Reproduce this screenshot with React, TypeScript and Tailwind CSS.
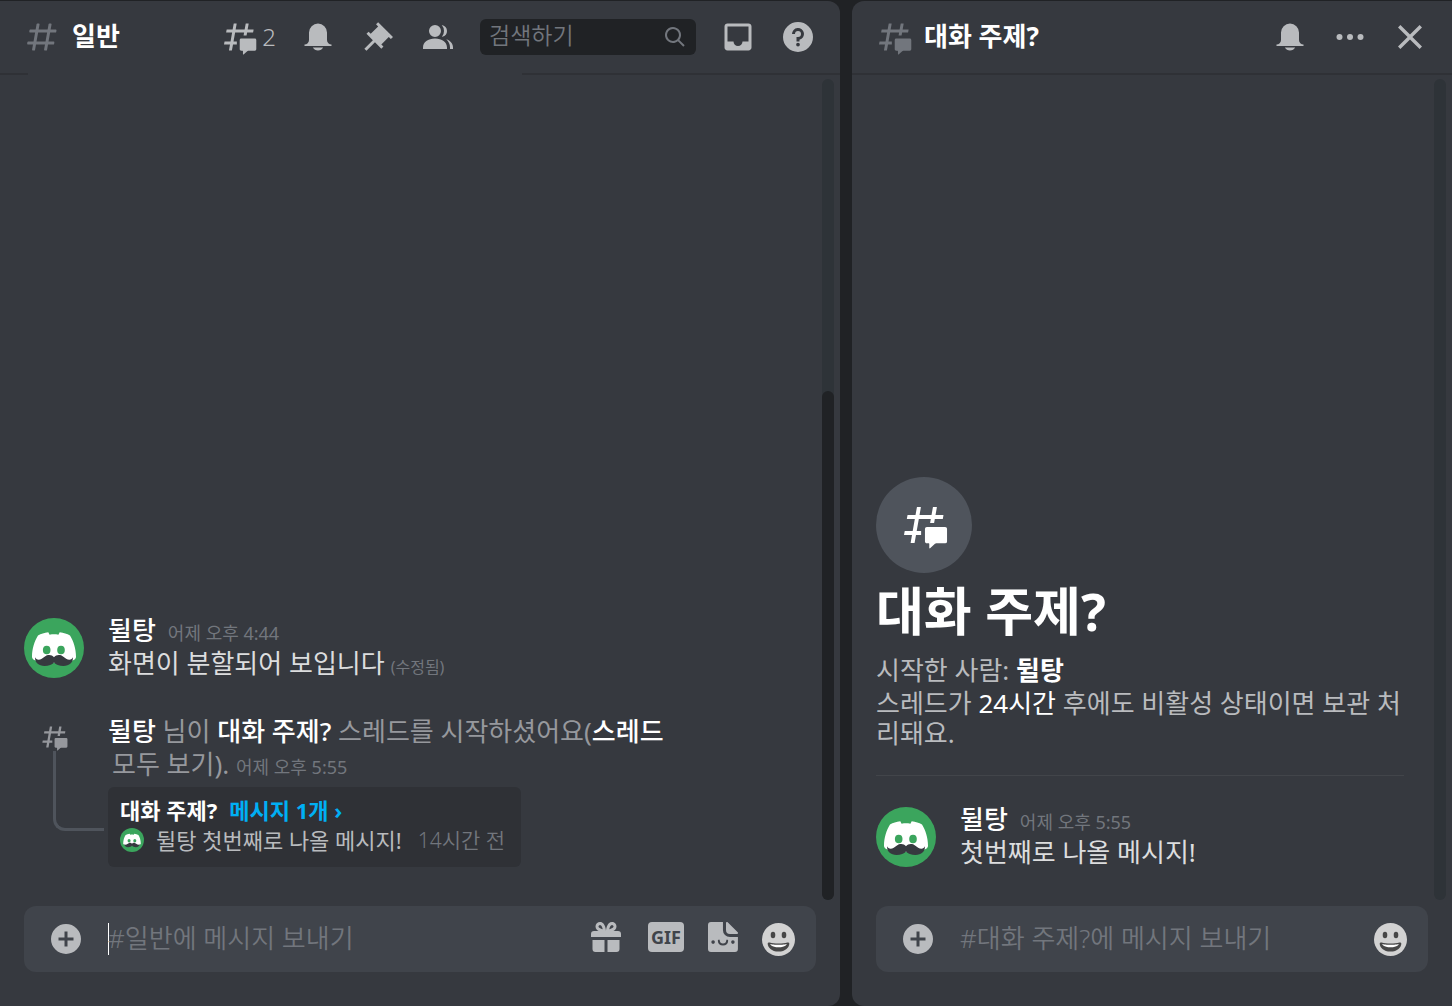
import React from "react";

type IconProps = { className?: string };

function Icon({ className = "size-9", children }: { className?: string; children: React.ReactNode }) {
  return (
    <svg viewBox="0 0 24 24" fill="currentColor" fillRule="evenodd" className={`shrink-0 ${className}`} aria-hidden="true">
      {children}
    </svg>
  );
}

function HashIcon({ className }: IconProps) {
  return (
    <Icon className={className}>
      <path d="M5.887 21a.5.5 0 0 1-.493-.587L6 17H2.595a.5.5 0 0 1-.492-.586l.175-1A.5.5 0 0 1 2.77 15h3.58l1.06-6H4.005a.5.5 0 0 1-.492-.586l.175-1A.5.5 0 0 1 4.18 7h3.58l.637-3.587A.5.5 0 0 1 8.889 3h.984a.5.5 0 0 1 .493.587L9.76 7h6l.637-3.587A.5.5 0 0 1 16.889 3h.984a.5.5 0 0 1 .493.587L17.76 7h3.405a.5.5 0 0 1 .492.586l-.175 1a.5.5 0 0 1-.492.414h-3.58l-1.06 6h3.405a.5.5 0 0 1 .492.586l-.175 1a.5.5 0 0 1-.492.414H16l-.637 3.587a.5.5 0 0 1-.492.413h-.984a.5.5 0 0 1-.493-.587L14 17H8l-.637 3.587a.5.5 0 0 1-.492.413h-.984ZM9.41 9l-1.06 6h6l1.06-6h-6Z" />
    </Icon>
  );
}

function ThreadIcon({ className }: IconProps) {
  return (
    <Icon className={className}>
      <path d="M5.433 21a.12.12 0 0 1-.118-.141L6 17H2.143a.12.12 0 0 1-.118-.141l.308-1.76A.12.12 0 0 1 2.45 15h3.9l1.06-6H3.553a.12.12 0 0 1-.118-.141l.308-1.76A.12.12 0 0 1 3.86 7h3.9l.692-3.901A.12.12 0 0 1 8.57 3h1.757a.12.12 0 0 1 .118.141L9.76 7h6l.692-3.901A.12.12 0 0 1 16.57 3h1.757a.12.12 0 0 1 .118.141L17.76 7h3.857a.12.12 0 0 1 .118.141l-.308 1.76a.12.12 0 0 1-.118.099h-3.9l-.36 2.04h-2l.361-2.04h-6l-1.06 6h2.21v2H8l-.693 3.901a.12.12 0 0 1-.118.099H5.433Z" />
      <path d="M13.44 12.96a.96.96 0 0 0-.96.96v6.301c0 .53.43.96.96.96h.96a.24.24 0 0 1 .24.24v2.039c0 .208.247.317.4.178l2.446-2.21a.96.96 0 0 1 .643-.247h4.431a.96.96 0 0 0 .96-.96V13.92a.96.96 0 0 0-.96-.96h-9.12Z" />
    </Icon>
  );
}

function BellIcon() {
  return (
    <Icon>
      <path d="M18 9v5a3 3 0 0 0 3 3v1H3v-1a3 3 0 0 0 3-3V9a6 6 0 0 1 12 0Zm-6 12a3.98 3.98 0 0 1-3.445-2h6.89A3.98 3.98 0 0 1 12 21Z" />
    </Icon>
  );
}

function PinIcon() {
  return (
    <Icon>
      <path d="M22 12 12.101 2.101l-1.415 1.413 1.415 1.415-4.95 4.949-1.415-1.413L4.322 9.88l4.243 4.242-5.657 5.656 1.414 1.414 5.657-5.656 4.243 4.242 1.414-1.414-1.414-1.414L19.172 12l1.414 1.414L22 12Z" />
    </Icon>
  );
}

function MembersIcon() {
  return (
    <Icon>
      <path d="M14 8.006a4 4 0 1 1-8 0 4 4 0 0 1 8 0Zm-12 11c0-3.533 3.29-6 8-6 4.711 0 8 2.467 8 6v1H2v-1Z" />
      <path d="M20 20.006h2v-1c0-2.563-1.73-4.565-4.479-5.471C19.062 14.913 20 16.806 20 19.006v1Z" />
      <path d="M14.883 11.908A4 4 0 0 0 18 8.006a4 4 0 0 0-3.503-3.97A5.98 5.98 0 0 1 16 8.007a5.98 5.98 0 0 1-1.362 3.804l.245.098Z" />
    </Icon>
  );
}

function InboxIcon() {
  return (
    <Icon>
      <path d="M19 3H4.99C3.88 3 3.01 3.89 3.01 5L3 19c0 1.1.88 2 1.99 2H19c1.1 0 2-.9 2-2V5c0-1.11-.9-2-2-2Zm0 12h-4c0 1.66-1.35 3-3 3s-3-1.34-3-3H4.99V5H19v10Z" />
    </Icon>
  );
}

function HelpIcon() {
  return (
    <Icon>
      <path d="M12 2a10 10 0 1 0 0 20 10 10 0 0 0 0-20Zm0 16.25a1.25 1.25 0 1 1 0-2.5 1.25 1.25 0 0 1 0 2.5Zm1-4.375V15h-2v-3h1a2 2 0 1 0-2-2H8a4 4 0 1 1 5 3.875Z" />
    </Icon>
  );
}

function SearchIcon() {
  return (
    <Icon className="size-6">
      <path d="M21.707 20.293 16.314 14.9A8 8 0 1 0 14.9 16.314l5.393 5.392 1.414-1.413ZM10 16a6 6 0 1 1 0-12 6 6 0 0 1 0 12Z" />
    </Icon>
  );
}

function MoreIcon() {
  return (
    <Icon>
      <circle cx="5" cy="12" r="2" />
      <circle cx="12" cy="12" r="2" />
      <circle cx="19" cy="12" r="2" />
    </Icon>
  );
}

function CloseIcon() {
  return (
    <Icon>
      <path d="M18.4 4 12 10.4 5.6 4 4 5.6l6.4 6.4L4 18.4 5.6 20l6.4-6.4 6.4 6.4 1.6-1.6-6.4-6.4L20 5.6 18.4 4Z" />
    </Icon>
  );
}

function PlusIcon() {
  return (
    <Icon>
      <path d="M12 2a10 10 0 1 0 0 20 10 10 0 0 0 0-20Zm5 11h-4v4h-2v-4H7v-2h4V7h2v4h4v2Z" />
    </Icon>
  );
}

function GiftIcon() {
  return (
    <Icon>
      <path d="M16.886 7.999H20a2 2 0 0 1 2 2v2H2v-2a2 2 0 0 1 2-2h3.114a4.9 4.9 0 0 1-1.235-.878 3 3 0 0 1 0-4.242c1.133-1.133 3.107-1.133 4.242-.002C11.758 4.514 11.979 7.595 11.998 7.941h.004c.02-.345.24-3.426 1.877-5.063 1.135-1.133 3.107-1.132 4.242-.001a3 3 0 0 1 0 4.243c-.357.357-.784.644-1.235.879ZM7.293 5.707a1 1 0 0 1 0-1.415 1 1 0 0 1 1.414 0c.59.59.934 1.648 1.118 2.53-.88-.183-1.946-.529-2.532-1.115Zm6.881 1.117c.185-.883.528-1.941 1.119-2.531a1 1 0 0 1 1.413-.002 1 1 0 0 1 .001 1.416c-.591.591-1.65.935-2.533 1.117ZM3 13.999v6a2 2 0 0 0 2 2h6v-8H3Zm10 0v8h6a2 2 0 0 0 2-2v-6h-8Z" />
    </Icon>
  );
}

function StickerIcon() {
  return (
    <svg viewBox="0 0 20 20" className="size-[30px] shrink-0" fill="currentColor" aria-hidden="true">
      <path d="M12 .663v4.739A2.598 2.598 0 0 0 14.599 8h4.74c.585 0 .883-.704.466-1.12L13.121.196C12.704-.22 12 .077 12 .663Z" />
      <path d="M14.576 10.028A4.606 4.606 0 0 1 9.97 5.422V.058H1.994A2 2 0 0 0 0 2.052v15.952a2 2 0 0 0 1.994 1.994h15.952a2 2 0 0 0 1.994-1.994v-7.976h-5.364Z" />
      <circle cx="3.4" cy="13.4" r="1.2" className="fill-[#40444b]" />
      <circle cx="16.6" cy="13.4" r="1.2" className="fill-[#40444b]" />
      <path d="M7.2 12.4c.2 3.4 5.4 3.4 5.6 0" fill="none" strokeWidth="1.3" strokeLinecap="round" className="stroke-[#40444b]" />
    </svg>
  );
}

function EmojiIcon() {
  return (
    <svg viewBox="0 0 33 33" className="size-[33px] shrink-0" aria-hidden="true">
      <circle cx="16.5" cy="16.5" r="16.5" fill="#d2d2d2" />
      <ellipse cx="11" cy="12" rx="2.3" ry="3.3" fill="#474747" />
      <ellipse cx="22" cy="12" rx="2.3" ry="3.3" fill="#474747" />
      <path d="M16.5 20.500c-3.800 0-6.300-.4-8.900-1-.8-.1-1.900 0-1.900 1.200 0 3.500 3.900 7.900 10.800 7.900s10.800-4.400 10.800-7.900c0-1.200-1.100-1.300-1.900-1.200-2.600.6-5.100 1-8.900 1Z" fill="#474747" />
      <path d="M8 20.900s3 .8 8.500.8 8.500-.8 8.500-.8-1.500 3.400-8.500 3.400S8 20.900 8 20.900Z" fill="#fff" />
    </svg>
  );
}

function Avatar({ className }: { className: string }) {
  return (
    <svg viewBox="0 0 60 60" className={`shrink-0 ${className}`} role="img" aria-label="뒬탕">
      <circle cx="30" cy="30" r="30" fill="#3ba55d" />
      <path
        d="M24.300 14.300c-4 .6-7.300 1.600-10.300 3.200C10.500 23 8 30.500 8 39c0 1.500 1.500 3 4 3.800l18 2.200 18-2.200c2.500-.8 4-2.300 4-3.800 0-8.500-2.500-16-6-21.500-3-1.600-6.300-2.600-10.300-3.200l-1.300 2.400c-3-.5-5.800-.5-8.800 0l-1.300-2.400Z"
        fill="#fff"
      />
      <ellipse cx="22.700" cy="32" rx="3.800" ry="4.300" fill="#3ba55d" />
      <ellipse cx="37" cy="32" rx="3.800" ry="4.300" fill="#3ba55d" />
      <path
        d="M30 39.200c-1.500-1.800-3.600-2.400-5.800-2.100-3.700.5-5.500 4.700-9.500 4.700-1.800 0-3-1-3.600-2.500-.5 5 3.600 8.700 9.400 8.700 4.200 0 7.800-1.200 9.500-3.400 1.700 2.200 5.300 3.400 9.500 3.400 5.800 0 9.900-3.700 9.400-8.700-.6 1.500-1.800 2.500-3.600 2.500-4 0-5.800-4.200-9.500-4.700-2.200-.3-4.300.3-5.800 2.100Z"
        fill="#36393f"
      />
    </svg>
  );
}

function IconButton({ label, children }: { label: string; children: React.ReactNode }) {
  return (
    <button type="button" aria-label={label} className="flex shrink-0 items-center text-[#b9bbbe] hover:text-[#dcddde]">
      {children}
    </button>
  );
}

function Message({ time, edited, children }: { time: string; edited?: boolean; children: React.ReactNode }) {
  return (
    <article className="flex gap-6">
      <Avatar className="mt-1 size-[60px]" />
      <div className="min-w-0">
        <h3 className="flex items-baseline gap-3 leading-[33px]">
          <span className="text-[26px] font-medium text-white">뒬탕</span>
          <time className="text-lg text-[#72767d]">{time}</time>
        </h3>
        <p className="text-[26px] leading-[33px] text-[#dcddde]">
          {children}
          {edited && <span className="ml-1.5 text-base text-[#72767d]">(수정됨)</span>}
        </p>
      </div>
    </article>
  );
}

function Composer({ id, placeholder, focused, children }: { id: string; placeholder: string; focused?: boolean; children?: React.ReactNode }) {
  return (
    <form className="mx-6 mb-[34px] flex h-[66px] items-center rounded-xl bg-[#40444b] pl-6 pr-[21px]" onSubmit={(e) => e.preventDefault()}>
      <IconButton label="업로드">
        <PlusIcon />
      </IconButton>
      <div className="ml-6 flex min-w-0 flex-1 items-center">
        {focused && <span className="-mr-px h-8 w-px shrink-0 bg-white" />}
        <input
          id={id}
          type="text"
          aria-label={placeholder}
          placeholder={placeholder}
          className="h-12 w-full min-w-0 bg-transparent pb-0.5 text-[26px] font-[350] text-[#dcddde] outline-none placeholder:text-[#72767d]"
        />
      </div>
      <div className="flex items-center gap-6">
        {children && <div className="flex items-center gap-6 pb-1">{children}</div>}
        <button type="button" aria-label="이모티콘">
          <EmojiIcon />
        </button>
      </div>
    </form>
  );
}

function ChannelPanel() {
  return (
    <main className="flex min-w-0 flex-[840_1_0] flex-col rounded-r-xl bg-[#36393f]">
      <header className="flex h-[72px] items-center gap-6 px-6">
        <div className="flex min-w-0 flex-1 items-center gap-3">
          <HashIcon className="size-9 text-[#72767d]" />
          <h1 className="pb-0.5 text-[26px] font-bold text-white">일반</h1>
        </div>
        <button type="button" aria-label="스레드 2개" className="flex items-center gap-[5px] text-[#b9bbbe]">
          <ThreadIcon />
          <span className="text-2xl font-[350] leading-9">2</span>
        </button>
        <IconButton label="알림 설정">
          <BellIcon />
        </IconButton>
        <IconButton label="고정된 메시지">
          <PinIcon />
        </IconButton>
        <IconButton label="멤버 목록">
          <MembersIcon />
        </IconButton>
        <div className="flex h-9 w-[216px] items-center rounded-md bg-[#202225] px-[9px] text-[#72767d]">
          <input
            id="search"
            type="text"
            aria-label="검색하기"
            placeholder="검색하기"
            className="h-9 min-w-0 flex-1 bg-transparent pb-1 text-[23px] font-[350] text-[#dcddde] outline-none placeholder:text-[#72767d]"
          />
          <SearchIcon />
        </div>
        <IconButton label="받은 편지함">
          <InboxIcon />
        </IconButton>
        <IconButton label="도움말">
          <HelpIcon />
        </IconButton>
      </header>
      <div className="flex h-0.5 justify-between">
        <span className="w-7 bg-[#2f3136]" />
        <span className="w-[318px] bg-[#2f3136]" />
      </div>

      <div className="flex flex-1">
        <div className="flex min-w-0 flex-1 flex-col justify-end pb-[39px] pl-6">
          <Message time="어제 오후 4:44" edited>화면이 분할되어 보입니다</Message>

          <article className="mt-[35px] flex gap-6">
            <div className="flex w-[60px] shrink-0 flex-col items-end">
              <ThreadIcon className="mr-4 mt-2 size-7 text-[#96989d]" />
              <span className="-mr-5 h-20 w-[51px] rounded-bl-xl border-b-[3px] border-l-[3px] border-[#4f545c]" />
            </div>
            <div className="min-w-0">
              <p className="text-[26px] leading-[33px] text-[#96989d]">
                <a href="#user" className="font-medium text-white">뒬탕</a> 님이{" "}
                <a href="#thread" className="font-medium text-white">대화 주제?</a> 스레드를 시작하셨어요(
                <a href="#threads" className="font-medium text-white">스레드</a>
                <span className="block pl-1">
                  <a href="#threads">모두 보기</a>). <time className="text-lg text-[#72767d]">어제 오후 5:55</time>
                </span>
              </p>
              <a href="#thread" className="mt-1.5 flex w-fit flex-col rounded-md bg-[#2f3136] px-3 pb-3 pt-2">
                <span className="flex items-baseline gap-3 text-[22px] font-bold leading-[30px]">
                  <span className="text-white">대화 주제?</span>
                  <span className="text-[#00aff4]">메시지 1개 ›</span>
                </span>
                <span className="flex items-center gap-3 text-[22px] leading-[30px] text-[#b9bbbe]">
                  <Avatar className="size-6" />
                  <span>뒬탕 첫번째로 나올 메시지!</span>
                  <time className="px-1 text-[21px] font-[350] text-[#72767d]">14시간 전</time>
                </span>
              </a>
            </div>
          </article>
        </div>
        <div className="mb-1.5 mr-1.5 mt-1 flex w-3 flex-col justify-end rounded-full bg-[#2e3338]">
          <span className="h-[62%] rounded-full bg-[#202225]" />
        </div>
      </div>

      <Composer id="channel-message" placeholder="#일반에 메시지 보내기" focused>
        <IconButton label="선물하기">
          <GiftIcon />
        </IconButton>
        <IconButton label="GIF">
          <span className="flex h-[30px] w-9 items-center justify-center rounded bg-[#b9bbbe] text-lg font-bold text-[#40444b]">GIF</span>
        </IconButton>
        <IconButton label="스티커">
          <StickerIcon />
        </IconButton>
      </Composer>
    </main>
  );
}

function ThreadPanel() {
  return (
    <aside className="flex min-w-0 flex-[600_1_0] flex-col rounded-l-xl bg-[#36393f]">
      <header className="flex h-[74px] items-center gap-6 border-b-2 border-[#2f3136] px-6">
        <div className="flex min-w-0 flex-1 items-center gap-3">
          <ThreadIcon className="size-9 text-[#72767d]" />
          <h2 className="pb-0.5 text-[26px] font-bold text-white">대화 주제?</h2>
        </div>
        <IconButton label="알림 설정">
          <BellIcon />
        </IconButton>
        <IconButton label="더 보기">
          <MoreIcon />
        </IconButton>
        <IconButton label="닫기">
          <CloseIcon />
        </IconButton>
      </header>

      <div className="flex flex-1">
        <div className="flex min-w-0 flex-1 flex-col justify-end pb-[37px] pl-6 pr-[30px]">
          <div className="flex size-24 items-center justify-center rounded-full bg-[#4f545c] text-white">
            <ThreadIcon className="size-12" />
          </div>
          <h2 className="mt-2 text-[52px] font-bold leading-[60px] text-white">대화 주제?</h2>
          <div className="mt-[11px] text-[26px] text-[#b9bbbe]">
            <p className="leading-[36px]">
              시작한 사람: <strong className="font-bold text-white">뒬탕</strong>
            </p>
            <p className="leading-[30px]">
              스레드가 <span className="text-white">24시간</span> 후에도 비활성 상태이면 보관 처리돼요.
            </p>
          </div>
          <hr className="my-[27px] border-[#42454a]" />
          <Message time="어제 오후 5:55">첫번째로 나올 메시지!</Message>
        </div>
        <div className="mb-1.5 mr-1.5 mt-1 w-3 rounded-full bg-[#2e3338]" />
      </div>

      <Composer id="thread-message" placeholder="#대화 주제?에 메시지 보내기" />
    </aside>
  );
}

export default function App() {
  return (
    <div className="flex min-h-screen gap-3 bg-[#202225] pt-px font-['Noto_Sans','Noto_Sans_CJK_KR',sans-serif]">
      <ChannelPanel />
      <ThreadPanel />
    </div>
  );
}
